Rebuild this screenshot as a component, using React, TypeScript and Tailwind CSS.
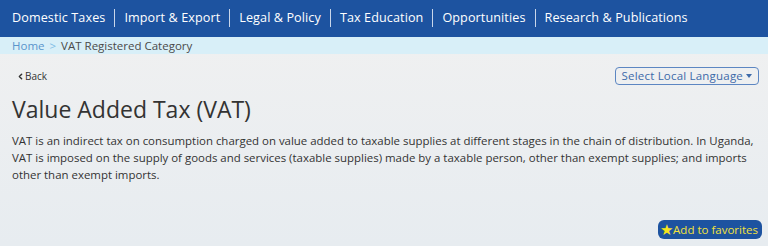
import { ChevronLeft } from "lucide-react";

const navItems = [
  "Domestic Taxes",
  "Import & Export",
  "Legal & Policy",
  "Tax Education",
  "Opportunities",
  "Research & Publications",
];

export default function App() {
  return (
    <div className="w-[768px] h-[246px] flex flex-col font-['Open_Sans',sans-serif] bg-gradient-to-b from-[#f1f1f1] to-[#e7ecf0] overflow-hidden">
      {/* Top nav */}
      <nav className="h-[37px] bg-[#1d53a0] flex items-center pl-[12px]">
        {navItems.map((item, i) => (
          <div key={item} className="flex items-center">
            {i > 0 && <span className="w-px h-[18px] bg-[#c9d6ea] mx-[9px]" />}
            <span className="text-[12.6px] text-white tracking-[0.1px]">{item}</span>
          </div>
        ))}
      </nav>

      {/* Breadcrumb */}
      <div className="h-[17px] bg-[#d8eff8] flex items-center pl-[12px] text-[11.5px] leading-none">
        <span className="text-[#5a95cc]">Home</span>
        <span className="text-[#7fbde6] mx-[5px]">&gt;</span>
        <span className="text-[#4a4a4a]">VAT Registered Category</span>
      </div>

      <div className="flex flex-col px-[12px]">
        <div className="flex items-center justify-between mt-[13px]">
          <button className="flex items-center text-[10px] text-[#333] ml-[4px]">
            <ChevronLeft className="w-[9px] h-[9px]" strokeWidth={4} />
            Back
          </button>
          <button className="flex items-center gap-[3px] border border-[#5c86c2] rounded-[4px] h-[18px] px-[6px] text-[11.5px] tracking-[0.2px] text-[#3d6aa9] mr-[-3px]">
            Select Local Language
            <span className="w-0 h-0 border-l-[3px] border-r-[3px] border-t-[4px] border-l-transparent border-r-transparent border-t-[#3d6aa9]" />
          </button>
        </div>

        <h1 className="text-[23px] text-[#333] mt-[10px] leading-[28px]">Value Added Tax (VAT)</h1>

        <p className="text-[11.45px] leading-[17px] text-[#333] mt-[9px]">
          VAT is an indirect tax on consumption charged on value added to taxable supplies at different stages in the chain of distribution. In Uganda, VAT is imposed on the supply of goods and services (taxable supplies) made by a taxable person, other than exempt supplies; and imports other than exempt imports.
        </p>

        <div className="flex justify-end mt-[37px] mr-[-6px]">
          <button className="flex items-center bg-[#1d53a0] rounded-[6px] h-[19px] pl-[2px] pr-[4px] text-[11.5px] text-[#f3e23a]">
            <span className="text-[15px] leading-none text-[#f7e51c]">★</span>
            Add to favorites
          </button>
        </div>
      </div>
    </div>
  );
}
